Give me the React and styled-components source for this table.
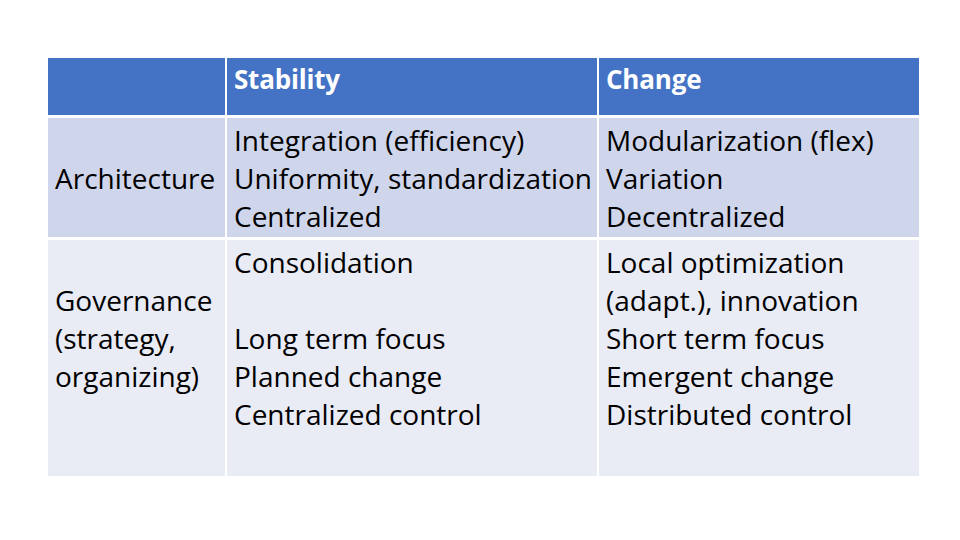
import React from "react";
import styled, { createGlobalStyle } from "styled-components";

const GlobalStyle = createGlobalStyle`
  html, body {
    margin: 0;
    padding: 0;
    background: #ffffff;
  }
  body {
    font-family: "Open Sans", "Noto Sans", "Liberation Sans", sans-serif;
  }
`;

const Page = styled.div`
  width: 960px;
  height: 540px;
  box-sizing: border-box;
  padding: 58px 0 0 48px;
  background: #ffffff;
`;

const Table = styled.div`
  display: grid;
  grid-template-columns: 177px 370px 320px;
  grid-template-rows: 57px 119px 236px;
  column-gap: 2px;
  row-gap: 3px;
`;

const bg = {
  head: "#4472c4",
  odd: "#cfd5ea",
  even: "#e9ebf5",
};

const Cell = styled.div`
  background: ${(p) => bg[p.$tone]};
  color: ${(p) => (p.$tone === "head" ? "#ffffff" : "#000000")};
  font-weight: ${(p) => (p.$tone === "head" ? 700 : 400)};
  font-size: ${(p) => (p.$tone === "head" ? "26px" : "28px")};
  letter-spacing: ${(p) => (p.$tone === "head" ? "-0.2px" : "0")};
  line-height: 38px;
  padding: ${(p) => (p.$tone === "head" ? "2px" : "3px")} 7px 0 7px;
  white-space: nowrap;
  overflow: visible;
`;

const Line = styled.div`
  height: 38px;
`;

const header = ["", "Stability", "Change"];

const rows = [
  {
    tone: "odd",
    cells: [
      ["", "Architecture", ""],
      ["Integration (efficiency)", "Uniformity, standardization", "Centralized"],
      ["Modularization (flex)", "Variation", "Decentralized"],
    ],
  },
  {
    tone: "even",
    cells: [
      ["", "Governance", "(strategy,", "organizing)"],
      ["Consolidation", "", "Long term focus", "Planned change", "Centralized control"],
      [
        "Local optimization",
        "(adapt.), innovation",
        "Short term focus",
        "Emergent change",
        "Distributed control",
      ],
    ],
  },
];

export default function App() {
  return (
    <>
      <GlobalStyle />
      <Page>
        <Table>
          {header.map((h, i) => (
            <Cell key={"h" + i} $tone="head">
              {h}
            </Cell>
          ))}
          {rows.map((row, r) =>
            row.cells.map((lines, c) => (
              <Cell key={r + "-" + c} $tone={row.tone}>
                {lines.map((t, k) => (
                  <Line key={k}>{t}</Line>
                ))}
              </Cell>
            ))
          )}
        </Table>
      </Page>
    </>
  );
}
